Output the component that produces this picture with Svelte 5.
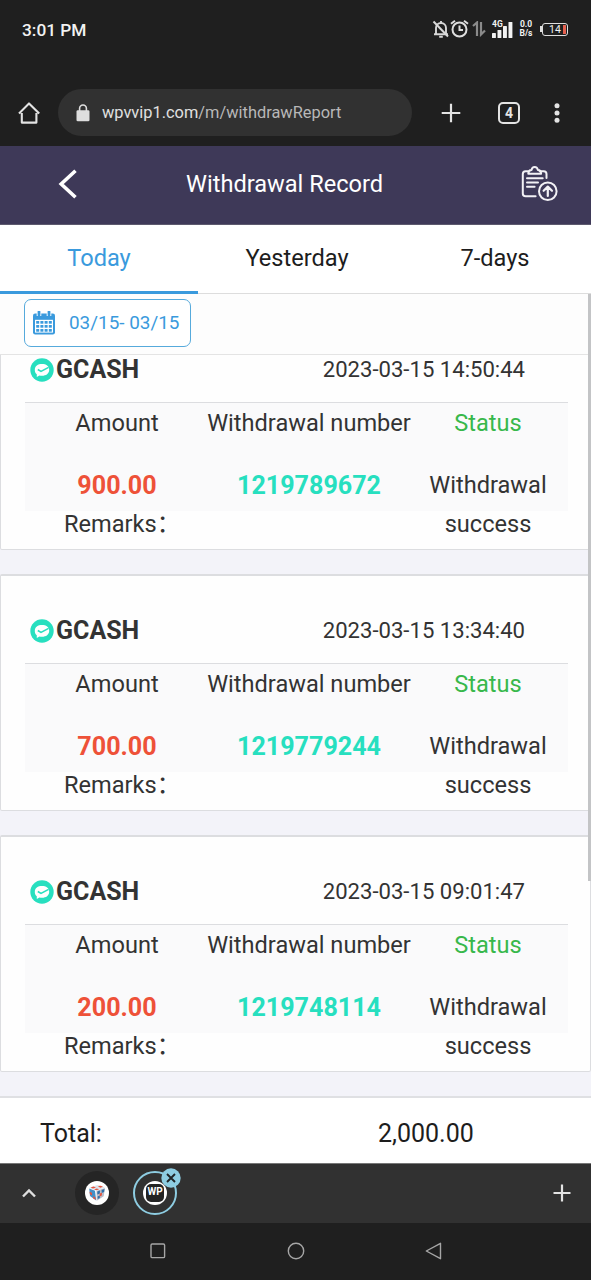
<script>
  const tabs = ['Today', 'Yesterday', '7-days'];
  let active = $state('Today');

  const records = [
    { time: '2023-03-15 14:50:44', amount: '900.00', number: '1219789672' },
    { time: '2023-03-15 13:34:40', amount: '700.00', number: '1219779244' },
    { time: '2023-03-15 09:01:47', amount: '200.00', number: '1219748114' }
  ];

  const signalBars = [5, 8, 12, 16];
  const calendarRows = [11, 15, 19];
  const calendarCols = [4, 8.2, 12.4, 16.6];
</script>

<div class="screen">
  <div class="statusbar">
    <span class="clock">3:01 PM</span>
    <div class="indicators">
      <svg class="bell" width="18" height="20" viewBox="0 0 18 20" fill="none" stroke="#d8d8d8" stroke-width="1.9">
        <path d="M4 15V9a5 5 0 0 1 10 0v6M2 15.2h14M9 2v2" />
        <path d="M7.2 17.7h3.6M1.5 2.5l14.5 15" stroke-width="2" />
      </svg>
      <svg class="alarm" width="19" height="20" viewBox="0 0 19 20" fill="none" stroke="#dedede" stroke-width="2">
        <circle cx="9.5" cy="10.5" r="7" />
        <path d="M9.5 6.5v4.5h3.5M1 4.8l4-3M18 4.8l-4-3" />
      </svg>
      <svg class="data" width="14" height="16" viewBox="0 0 14 16" fill="none" stroke="#8a8a8a" stroke-width="2.2">
        <path d="M1 5l4-3.5V15M9 1v12.5l4-4" />
      </svg>
      <div class="signal">
        <span>4G</span>
        <svg width="21" height="17" viewBox="0 0 21 17" fill="#f2f2f2">
          {#each signalBars as h, i}
            <rect x={i * 5.5} y={17 - h} width="3.9" height={h} rx="0.6" />
          {/each}
        </svg>
      </div>
      <div class="speed"><span>0.0</span><span>B/s</span></div>
      <div class="battery"><span>14</span><i></i></div>
    </div>
  </div>

  <div class="browser">
    <svg class="home" width="24" height="24" viewBox="0 0 24 24" fill="none" stroke="#e3e3e3" stroke-width="2.1" stroke-linejoin="round">
      <path d="M4.8 12v9.6h14.6V12M2 12.6L12 2.4l10.2 10.2" />
    </svg>
    <div class="address">
      <svg width="14" height="18" viewBox="0 0 14 18">
        <rect x="0.5" y="6.3" width="13" height="11" rx="1.3" fill="#dedede" />
        <path d="M3.6 7V4.4a3.4 3.4 0 0 1 6.8 0V7" fill="none" stroke="#dedede" stroke-width="1.6" />
      </svg>
      <span>wpvvip1.com<em>/m/withdrawReport</em></span>
    </div>
    <svg class="new" width="20" height="20" viewBox="0 0 20 20" stroke="#e3e3e3" stroke-width="2.2">
      <path d="M10 .7v18.6M.7 10h18.6" />
    </svg>
    <div class="tabcount">4</div>
    <svg class="more" width="6" height="20" viewBox="0 0 6 20" fill="#e3e3e3">
      <circle cx="3" cy="2.7" r="2.5" />
      <circle cx="3" cy="10" r="2.5" />
      <circle cx="3" cy="17.3" r="2.5" />
    </svg>
  </div>

  <header>
    <svg class="back" width="20" height="30" viewBox="0 0 20 30" fill="none" stroke="#fff" stroke-width="3.6">
      <path d="M17.5 1.7L3.2 15l14.3 13.3" />
    </svg>
    <h1>Withdrawal Record</h1>
    <svg class="report" width="37" height="36" viewBox="0 0 37 36" fill="none" stroke="#f2f1f5" stroke-width="2" stroke-linecap="round" stroke-linejoin="round">
      <path d="M7 5.2H4.5Q1.8 5.2 1.8 8v19.5q0 2.8 2.8 2.8h10M19 5.2h3.7q2.8 0 2.8 2.8v4" />
      <path d="M7.3 7.8c0-2.5.8-3.6 3.2-3.7.7-4 5.6-4 6.4 0 2.4.1 3.2 1.2 3.2 3.7z" />
      <path d="M6 12.2h15.7M6 16.5h11M6 20.8h7.6" />
      <circle cx="26.8" cy="25.3" r="8.8" />
      <path d="M26.8 30v-8.5M22.6 24.8l4.2-4.2 4.2 4.2" stroke-width="2.2" />
    </svg>
  </header>

  <nav class="tabs">
    {#each tabs as tab}
      <button class:active={active === tab} onclick={() => (active = tab)}>{tab}</button>
    {/each}
  </nav>

  <main>
    <div class="filter">
      <button class="range">
        <svg width="22" height="24" viewBox="0 0 22 24">
          <rect y="2.4" width="22" height="21" rx="2.2" fill="#3a9add" />
          <rect x="2" y="8.8" width="18" height="12.8" fill="#fff" />
          <path d="M6 0v5M16 0v5" stroke="#fff" stroke-width="4.6" />
          <path d="M6 .8v3.4M16 .8v3.4" stroke="#3a9add" stroke-width="2.8" stroke-linecap="round" />
          {#each calendarRows as y}
            {#each calendarCols as x}
              <rect x={x - 0.8} y={y - 1} width="3" height="2.7" fill="#3a9add" />
            {/each}
          {/each}
        </svg>
        <span>03/15- 03/15</span>
      </button>
    </div>

    <div class="viewport">
      <div class="list">
        {#each records as record}
          <article>
            <div class="card-head">
              <svg width="24" height="24" viewBox="0 0 24 24">
                <circle cx="12" cy="12" r="11.7" fill="#27dfbf" />
                <path d="M4.8 12c0-4.2 3.1-6 7.2-6s7.2 1.9 7.2 5.8-3.1 6-7.2 6c-1 0-1.8-.1-2.6-.3l-2.6 1.6v-2.8c-1.3-1-2-2.4-2-4.3z" fill="#fff" />
                <path d="M7.8 11.5l3.2 1.9 7.6-4" fill="none" stroke="#27dfbf" stroke-width="1.6" />
              </svg>
              <strong>GCASH</strong>
              <time>{record.time}</time>
            </div>
            <div class="details">
              <span>Amount</span>
              <span class="heading">Withdrawal number</span>
              <span class="status">Status</span>
              <b class="amount">{record.amount}</b>
              <b class="number">{record.number}</b>
              <span>Withdrawal success</span>
            </div>
            <div class="remarks">Remarks<span>：</span></div>
          </article>
        {/each}
      </div>
    </div>
    <div class="scrollbar"></div>
  </main>

  <div class="total">
    <span>Total:</span>
    <span>2,000.00</span>
  </div>

  <div class="tabstrip">
    <svg class="up" width="14" height="10" viewBox="0 0 14 10" fill="none" stroke="#dedede" stroke-width="2.4">
      <path d="M1 8.5l6-6 6 6" />
    </svg>
    <div class="site">
      <svg width="24" height="24" viewBox="0 0 24 24">
        <circle cx="12" cy="12" r="12" fill="#fff" />
        <path d="M4.2 7.5L10 9.8l1.2 9.7L5 15z" fill="#4290c8" />
        <path d="M11.5 9.8L20 7l-1.3 8.2-7 4.6z" fill="#b9bdc9" />
        <path d="M4.2 7l8-3L20 6.5l-9 3z" fill="#dce3ed" />
        <path d="M5.6 6.6l2.8-1.2 2.6 1.1-3 1zM12.8 5l2.9-.2 2.3 1-2.8 1zM9.2 8.6l2.6-1.2 2.4.8-2.9 1.1zM4.5 10.8l2.4 1 .2 2.8-2.2-1.3zM8 15.2l2.2 1 .5 2.6-2.4-1.4z" fill="#e5533d" />
        <path d="M12.3 10.4l2.6-.9v2.9l-2.5 1zM16.6 9l2.9-1-.4 3-2.4 1zM12.6 15.5l2.2-1v2.4l-2 1.2z" fill="#2e6faa" />
        <path d="M14.7 12.6l2.3-.9-.2 2.8-2.1 1z" fill="#e5533d" />
      </svg>
    </div>
    <div class="site current">
      <div class="wp"><span>WP</span></div>
      <svg class="close" width="20" height="20" viewBox="0 0 20 20">
        <circle cx="10" cy="10" r="9.7" fill="#8ecde2" />
        <path d="M6 6l8 8M14 6l-8 8" stroke="#1f2426" stroke-width="1.9" />
      </svg>
    </div>
    <svg class="add" width="18" height="18" viewBox="0 0 18 18" stroke="#e3e3e3" stroke-width="2.2">
      <path d="M9 .5v17M.5 9h17" />
    </svg>
  </div>

  <div class="sysnav">
    <svg width="16" height="16" viewBox="0 0 16 16"><rect x="1" y="1" width="13.6" height="13.6" rx="1.2" /></svg>
    <svg width="18" height="18" viewBox="0 0 18 18"><circle cx="9" cy="9" r="7.7" /></svg>
    <svg width="17" height="18" viewBox="0 0 17 18"><path d="M15.5 1.3v15.4L1.3 9z" stroke-linejoin="round" /></svg>
  </div>
</div>

<style>
  :global(body) {
    margin: 0;
    background: #1f1f1f;
  }

  .screen {
    width: 591px;
    height: 1280px;
    display: flex;
    flex-direction: column;
    overflow: hidden;
    background: #fff;
    font-family: Roboto, 'Noto Sans CJK SC', sans-serif;
    color: #333;
  }

  .screen * {
    box-sizing: border-box;
  }

  svg {
    flex-shrink: 0;
  }

  button {
    border: none;
    padding: 0;
    background: none;
    font: inherit;
    color: inherit;
  }

  .statusbar {
    height: 60px;
    display: flex;
    align-items: center;
    justify-content: space-between;
    padding: 0 22px;
    background: #1f1f1f;
    color: #f2f2f2;
    flex-shrink: 0;
  }

  .clock {
    font-size: 17.3px;
    font-weight: 500;
  }

  .indicators {
    display: flex;
    align-items: center;
    height: 20px;
    margin-top: -2px;
  }

  .alarm {
    margin-right: 3px;
  }

  .data {
    margin-right: 6px;
  }

  .signal {
    position: relative;
    height: 17px;
    margin-right: 6px;
  }

  .signal svg {
    display: block;
  }

  .signal span {
    position: absolute;
    top: -1px;
    left: 0;
    font-size: 8.5px;
    line-height: 8px;
    font-weight: 700;
  }

  .speed {
    width: 14px;
    display: flex;
    flex-direction: column;
    align-items: center;
    margin-right: 9px;
    font-size: 8.5px;
    line-height: 9px;
    font-weight: 700;
  }

  .battery {
    position: relative;
    width: 26px;
    height: 13px;
    display: flex;
    align-items: center;
    justify-content: space-between;
    margin-right: 1px;
    border: 1.5px solid #dedede;
    border-radius: 3px;
    padding: 0 1px 0 6px;
    font-size: 10.5px;
    line-height: 11px;
  }

  .battery::before {
    content: '';
    position: absolute;
    left: -3px;
    top: 2.5px;
    width: 2px;
    height: 6px;
    background: #dedede;
  }

  .battery i {
    width: 3px;
    height: 9px;
    background: #e4604f;
  }

  .browser {
    height: 86px;
    display: flex;
    align-items: center;
    padding: 19px 31px 0 17px;
    background: #1f1f1f;
    flex-shrink: 0;
  }

  .home {
    margin-right: 17px;
  }

  .address {
    width: 354px;
    height: 47px;
    display: flex;
    align-items: center;
    gap: 12px;
    padding-left: 18px;
    border-radius: 24px;
    background: #313131;
    color: #e0e0e0;
    font-size: 16.4px;
  }

  .address em {
    font-style: normal;
    color: #b8b8b8;
  }

  .new {
    margin-left: 29px;
  }

  .tabcount {
    width: 22px;
    height: 22px;
    margin-left: 37px;
    border: 2.2px solid #e3e3e3;
    border-radius: 5px;
    color: #e3e3e3;
    font-size: 14px;
    font-weight: 700;
    line-height: 18px;
    text-align: center;
  }

  .more {
    margin-left: auto;
  }

  header {
    height: 79px;
    display: flex;
    align-items: center;
    padding: 0 33px 2px 58px;
    border-bottom: 1px solid #5d5a6e;
    background: #3e3958;
    color: #fff;
    flex-shrink: 0;
  }

  h1 {
    margin: 0 0 0 108px;
    font-size: 23.6px;
    font-weight: 400;
    white-space: nowrap;
  }

  .report {
    margin-left: auto;
  }

  .tabs {
    height: 69px;
    display: flex;
    border-bottom: 1px solid #ddd;
    color: #1d1d1d;
    flex-shrink: 0;
  }

  .tabs button {
    width: 198px;
    height: 69px;
    flex-shrink: 0;
    padding-bottom: 1px;
    border-bottom: 3px solid transparent;
    font-size: 23.6px;
  }

  .tabs button.active {
    border-color: #3a9add;
    color: #3a9add;
  }

  main {
    position: relative;
    height: 803px;
    flex-shrink: 0;
  }

  .filter {
    height: 61px;
    padding: 5px 24px 0;
    border-bottom: 1px solid #e4e4e4;
    background: #fdfdfd;
  }

  .range {
    width: 167px;
    height: 48px;
    display: flex;
    align-items: center;
    gap: 14px;
    padding: 0 0 1px 8px;
    border: 1px solid #56aadc;
    border-radius: 7px;
    background: #fff;
    color: #3a9add;
    font-size: 18.9px;
    white-space: nowrap;
  }

  .viewport {
    height: 742px;
    overflow: hidden;
    background: #f3f3f9;
  }

  .list {
    display: flex;
    flex-direction: column;
    gap: 24px;
    margin-top: -42px;
  }

  article {
    height: 237px;
    border: 1px solid #dcdde0;
    border-top-width: 2px;
    border-radius: 2px;
    padding: 0 22px 0 24px;
    background: #fefefe;
  }

  .card-head {
    height: 88px;
    display: flex;
    align-items: center;
    padding: 22px 43px 0 5px;
    border-bottom: 1px solid #dcdde0;
  }

  .card-head strong {
    margin-left: 2px;
    font-size: 25px;
    font-weight: 700;
  }

  .card-head time {
    margin: -1px 0 0 auto;
    font-size: 22.1px;
  }

  .details {
    height: 108px;
    display: grid;
    grid-template-columns: 184px 200px 158px;
    grid-template-rows: 39px 39px;
    row-gap: 23px;
    padding-top: 1px;
    background: #fafafb;
    font-size: 23.6px;
    line-height: 39px;
    text-align: center;
  }

  .heading {
    justify-self: center;
    white-space: nowrap;
  }

  .status {
    color: #38b84b;
  }

  .amount,
  .number {
    font-size: 25.1px;
    color: #ee5138;
  }

  .number {
    color: #27dfbf;
  }

  .remarks {
    margin-top: -6px;
    padding-left: 39px;
    font-size: 23.6px;
    line-height: 39px;
    width: 160px;
    height: 39px;
    white-space: nowrap;
  }

  .scrollbar {
    position: absolute;
    top: 0;
    right: 0;
    width: 3px;
    height: 587px;
    background: #c3c4c6;
  }

  .total {
    height: 67px;
    display: grid;
    grid-template-columns: 338px 1fr;
    align-items: center;
    margin-top: -1px;
    padding: 5px 0 0 40px;
    border-top: 2px solid #dfe0e3;
    background: #fff;
    color: #1d1d1d;
    font-size: 25px;
    position: relative;
    flex-shrink: 0;
  }

  .tabstrip {
    height: 60px;
    display: flex;
    align-items: center;
    padding: 0 20px 2px 22px;
    border-top: 1px solid #777;
    background: #313131;
    flex-shrink: 0;
  }

  .site {
    position: relative;
    width: 44px;
    height: 44px;
    display: flex;
    align-items: center;
    justify-content: center;
    margin-left: 39px;
    border-radius: 50%;
    background: #252525;
  }

  .site.current {
    margin-left: 14px;
    border: 2px solid #8ecde2;
    background: transparent;
  }

  .wp {
    width: 24px;
    height: 24px;
    display: flex;
    align-items: center;
    justify-content: center;
    border-radius: 50%;
    background: #fff;
  }

  .wp span {
    width: 18px;
    height: 18px;
    border-radius: 5px;
    background: #242424;
    color: #fff;
    font-size: 10px;
    font-weight: 700;
    line-height: 16px;
    text-align: center;
  }

  .close {
    position: absolute;
    top: -5px;
    right: -6px;
  }

  .add {
    margin-left: auto;
  }

  .sysnav {
    height: 58px;
    display: flex;
    align-items: center;
    justify-content: space-between;
    padding: 0 149px 2px 150px;
    background: #1f1f1f;
  }

  .sysnav svg {
    fill: none;
    stroke: #a6a6a6;
    stroke-width: 1.4;
  }
</style>
